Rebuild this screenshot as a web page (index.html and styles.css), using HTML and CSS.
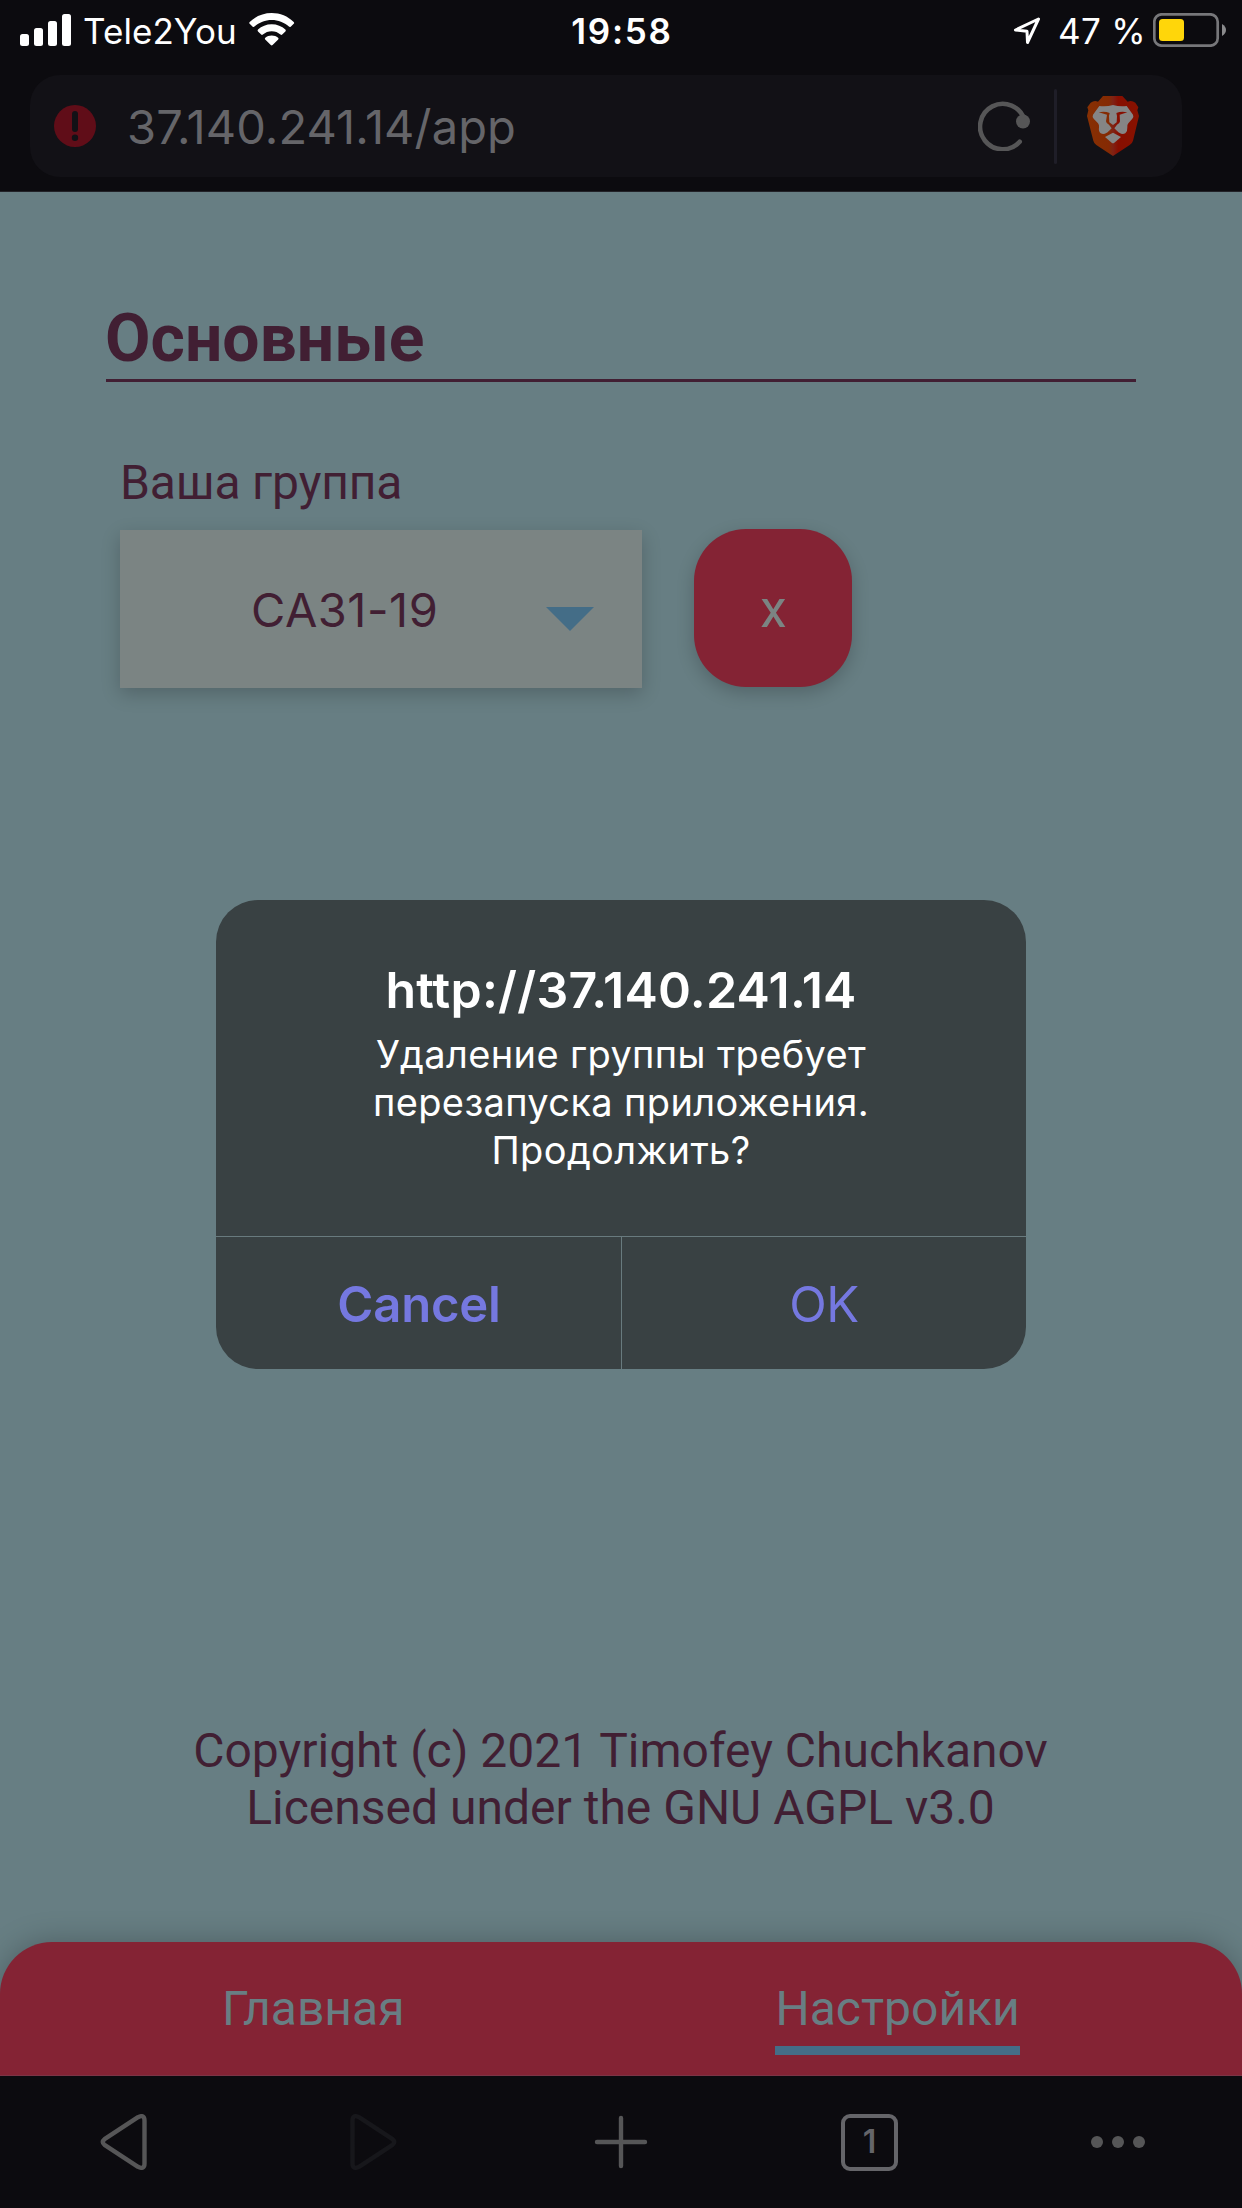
FILE: index.html
```html
<!DOCTYPE html>
<html lang="ru">
<head>
<meta charset="utf-8">
<title>Настройки</title>
<link rel="stylesheet" href="styles.css">
</head>
<body>
<div class="screen">
  <header class="chrome">
    <div class="status">
      <div class="status-left">
        <svg class="signal" width="51" height="32" viewBox="0 0 51 32" fill="#fff">
          <rect x="0" y="20" width="9" height="12" rx="2.5"/>
          <rect x="14" y="14" width="9" height="18" rx="2.5"/>
          <rect x="28" y="7" width="9" height="25" rx="2.5"/>
          <rect x="42" y="0" width="9" height="32" rx="2.5"/>
        </svg>
        <span class="carrier">Tele2You</span>
        <svg class="wifi" width="46" height="34" viewBox="0 0 46 34" fill="#fff">
          <path d="M22.7 0C31 0 39 3.300 44.700 8.900Q45.600 9.900 44.700 10.800L41.700 13.700Q40.800 14.400 39.900 13.600C35.200 9.400 29.200 7 22.700 7S10.200 9.400 5.500 13.600Q4.600 14.400 3.700 13.700L.7 10.800Q-.2 9.900 .7 8.900C6.400 3.300 14.400 0 22.700 0Z"/>
          <path d="M22.700 11.200C28 11.200 32.800 13.200 36.400 16.600Q37.300 17.500 36.400 18.400L33.200 21.600Q32.400 22.300 31.500 21.500C29.100 19.400 26 18.200 22.700 18.200S16.300 19.400 13.900 21.500Q13 22.300 12.200 21.600L9 18.400Q8.100 17.500 9 16.600C12.600 13.200 17.400 11.200 22.700 11.200Z"/>
          <path d="M22.700 22.500C25.200 22.500 27.400 23.300 29.100 24.700Q30 25.500 29.200 26.400L23.600 32Q22.700 32.900 21.800 32L16.200 26.400Q15.400 25.500 16.300 24.700C18 23.300 20.200 22.500 22.700 22.500Z"/>
        </svg>
      </div>
      <div class="clock">19:58</div>
      <div class="status-right">
        <svg class="location" width="28" height="28" viewBox="0 0 28 28" fill="none" stroke="#fff" stroke-width="3" stroke-linejoin="round">
          <path d="M25.500 2L2.500 13L14 14.300L14.500 25.500Z"/>
        </svg>
        <span class="percent">47 %</span>
        <svg class="battery" width="74" height="34" viewBox="0 0 74 34">
          <rect x="1.300" y="1.300" width="63.400" height="31.400" rx="7.500" fill="none" stroke="#77777a" stroke-width="2.700"/>
          <rect x="6" y="6" width="25" height="22" rx="3.500" fill="#ffd60a"/>
          <path d="M69 11Q73 13.500 73 17T69 23Z" fill="#8a8a8c"/>
        </svg>
      </div>
    </div>
    <div class="field">
      <svg class="alert" width="42" height="42" viewBox="0 0 42 42">
        <circle cx="21" cy="21" r="21" fill="#600d18"/>
        <rect x="18" y="6" width="6" height="21" rx="3" fill="#121116"/>
        <circle cx="21" cy="32.800" r="3.200" fill="#121116"/>
      </svg>
      <span class="url">37.140.241.14/app</span>
      <svg class="reload" width="52" height="50" viewBox="0 0 52 50">
        <path d="M46.500 19A22.700 22.700 0 1 0 41.700 40.700" fill="none" stroke="#565657" stroke-width="4.600" stroke-linecap="round"/>
        <circle cx="45" cy="20.500" r="7" fill="#565657"/>
      </svg>
      <span class="bar"></span>
      <svg class="lion" width="52" height="60" viewBox="0 0 156 180">
        <defs>
          <linearGradient id="mane" gradientUnits="userSpaceOnUse" x1="0" y1="0" x2="156" y2="0">
            <stop offset="0" stop-color="#873003"/>
            <stop offset=".42" stop-color="#852a03"/>
            <stop offset=".5" stop-color="#7f2215"/>
            <stop offset=".6" stop-color="#870e00"/>
            <stop offset="1" stop-color="#871200"/>
          </linearGradient>
        </defs>
        <path fill="url(#mane)" d="M48 0H106L122 17Q134 12 145 20L154 34L151 43L156 60L138 134Q136 142 128 147L78 180L28 147Q21 142 19 134L0 60L4 43L1 34L11 20Q22 12 33 17Z"/>
        <path fill="#858585" d="M37 30Q58 33 78 27Q98 33 119 30L138 56Q141 62 136 68L124 82Q120 87 121 94Q122 106 115 112Q106 116 98 111L78 99L58 111Q50 116 41 112Q34 106 36 94Q37 87 33 82L20 68Q15 62 18 56Z"/>
        <path fill="#858585" d="M78 110L102 123L82 140Q78 143 74 140L54 123Z"/>
        <path fill="url(#mane)" d="M35 49Q53 45 68 51L66 60L67 79L78 87L89 79L90 60L88 51Q103 45 121 49L98 56L99 76Q98 84 90 86L82 97L94 109L90 107L78 101L66 107L62 109L74 97L66 86Q58 84 57 76L60 56Z"/>
      </svg>
    </div>
  </header>

  <main class="page">
    <section class="settings">
      <h1 class="heading">Основные</h1>
      <div class="group">
        <label class="label">Ваша группа</label>
        <div class="controls">
          <div class="select">
            <span class="value">СА31-19</span>
            <svg width="48" height="24" viewBox="0 0 48 24"><path d="M0 0H48L24 24Z" fill="#446d87"/></svg>
          </div>
          <button class="remove">x</button>
        </div>
      </div>
    </section>
    <footer class="legal">Copyright (c) 2021 Timofey Chuchkanov<br>Licensed under the GNU AGPL v3.0</footer>
    <nav class="tabs">
      <a class="tab">Главная</a>
      <a class="tab tab-active">Настройки</a>
    </nav>
  </main>

  <div class="toolbar">
    <svg width="48" height="56" viewBox="0 0 48 56" fill="none" stroke="#565657" stroke-width="4.400" stroke-linejoin="round"><path d="M38 3.200L4.500 25.200Q1 28 4.500 30.800L38 52.800Q44.500 56 44.500 49.500V6.500Q44.500 0 38 3.200Z"/></svg>
    <svg width="48" height="56" viewBox="0 0 48 56" fill="none" stroke="#17171b" stroke-width="4.400" stroke-linejoin="round"><path d="M10 3.200L43.500 25.200Q47 28 43.500 30.800L10 52.800Q3.500 56 3.500 49.500V6.500Q3.500 0 10 3.200Z"/></svg>
    <svg width="54" height="54" viewBox="0 0 54 54" fill="none" stroke="#565657" stroke-width="4.400" stroke-linecap="round"><path d="M27 3V51M3 27H51"/></svg>
    <span class="tab-count">1</span>
    <svg width="54" height="12" viewBox="0 0 54 12" fill="#565657"><circle cx="6" cy="6" r="6"/><circle cx="27" cy="6" r="6"/><circle cx="48" cy="6" r="6"/></svg>
  </div>

  <div class="dialog">
    <div class="dialog-body">
      <div class="dialog-title">http://37.140.241.14</div>
      <div class="dialog-text">Удаление группы требует<br>перезапуска приложения.<br>Продолжить?</div>
    </div>
    <div class="dialog-actions">
      <button class="action action-cancel">Cancel</button>
      <button class="action">OK</button>
    </div>
  </div>
</div>
</body>
</html>
```
FILE: styles.css
```css
* { box-sizing: border-box; }
body { margin: 0; background: #0c0b0f; }
svg { display: block; flex: none; }
button { border: 0; margin: 0; padding: 0; background: none; font: inherit; }

.screen {
  position: relative;
  display: flex;
  flex-direction: column;
  width: 1242px;
  height: 2208px;
  overflow: hidden;
  font-family: Inter, "Liberation Sans", sans-serif;
  white-space: nowrap;
}

/* browser top bar */
.chrome {
  height: 192px;
  background: #0c0b0f;
  border-bottom: 1px solid #222228;
}
.status {
  display: grid;
  grid-template-columns: 1fr auto 1fr;
  height: 75px;
  padding: 0 15px 0 20px;
  color: #fff;
  font-size: 35px;
  line-height: 62px;
}
.status-left, .status-right { display: flex; align-items: flex-start; }
.status-right { justify-content: flex-end; }
.signal { margin-top: 14px; }
.carrier { margin-left: 12px; letter-spacing: .06px; }
.wifi { margin: 13px 0 0 12px; }
.clock { margin-left: -3px; font-weight: 600; letter-spacing: 1.7px; }
.location { margin: 17px 17px 0 0; }
.percent { letter-spacing: .35px; }
.battery { margin: 13px 0 0 7px; }

.field {
  display: flex;
  align-items: center;
  width: 1152px;
  height: 102px;
  margin-left: 30px;
  padding: 0 43px 0 24px;
  border-radius: 30px;
  background: #121116;
}
.url {
  flex: 1;
  margin-left: 31px;
  font-size: 47px;
  letter-spacing: .11px;
  color: #656569;
}
.bar { width: 3px; height: 75px; margin: 0 30px 0 24px; border-radius: 2px; background: #1f1e28; }

/* web page */
.page {
  display: flex;
  flex-direction: column;
  height: 1884px;
  background: #677e83;
  color: #411f33;
  font-family: Roboto, "Liberation Sans", sans-serif;
  font-size: 48px;
}
.settings { flex: 1; padding: 107px 106px 0; }
.heading {
  margin: 0;
  border-bottom: 3px solid #411f33;
  font-size: 66px;
  font-weight: 700;
  line-height: 80px;
  text-indent: -1px;
}
.group { padding: 73px 0 0 14px; }
.label { display: block; line-height: 56px; letter-spacing: -.15px; }
.controls { display: flex; align-items: flex-start; gap: 52px; margin-top: 18px; }
.select {
  display: flex;
  align-items: center;
  justify-content: space-between;
  width: 522px;
  height: 158px;
  margin-top: 1px;
  padding: 0 48px 0 131px;
  background: #7b8483;
  box-shadow: 0 6px 18px rgba(0, 0, 0, .2);
}
.select svg { margin-top: 20px; }
.value { padding-top: 1px; font-family: Inter, sans-serif; font-size: 47px; letter-spacing: .5px; }
.remove {
  width: 158px;
  height: 158px;
  padding: 2px 0 0 1px;
  border-radius: 52px;
  background: #842334;
  box-shadow: 0 6px 18px rgba(0, 0, 0, .2);
  color: #7b8483;
  font-size: 53px;
}
.legal { padding: 0 1px 106px 0; line-height: 57px; text-align: center; }
.tabs {
  display: flex;
  gap: 371px;
  height: 134px;
  padding: 39px 0 0 222px;
  border-bottom: 1px solid #7c3446;
  border-radius: 52px 52px 0 0;
  background: #842334;
  box-shadow: 0 0 30px rgba(0, 0, 0, .25);
  color: #687e83;
}
.tab { height: 74px; line-height: 56px; }
.tab-active { border-bottom: 9px solid #446d87; }

/* browser bottom bar */
.toolbar {
  display: grid;
  grid-template-columns: repeat(5, 1fr);
  align-items: center;
  justify-items: center;
  height: 132px;
  background: #0c0b0f;
}
.tab-count {
  width: 57px;
  height: 57px;
  border: 4px solid #656569;
  border-radius: 9px;
  color: #656569;
  font-size: 32px;
  font-weight: 600;
  line-height: 48px;
  text-align: center;
}

/* confirmation dialog */
.dialog {
  position: absolute;
  left: 216px;
  top: 900px;
  width: 810px;
  height: 469px;
  overflow: hidden;
  border-radius: 42px;
  background: #394143;
  text-align: center;
}
.dialog-body { height: 336px; padding-top: 60px; color: #fff; }
.dialog-title { font-size: 50px; font-weight: 600; line-height: 60px; letter-spacing: .24px; }
.dialog-text { margin-top: 10px; font-size: 38px; line-height: 48px; letter-spacing: .36px; }
.dialog-actions {
  display: grid;
  grid-template-columns: 406px 1fr;
  height: 133px;
  border-top: 1px solid #687a7e;
}
.action { padding-top: 2px; color: #7578e0; font-size: 49px; letter-spacing: -.5px; }
.action-cancel { padding-left: 1px; border-right: 1px solid #687a7e; font-weight: 600; letter-spacing: -.2px; }
```
